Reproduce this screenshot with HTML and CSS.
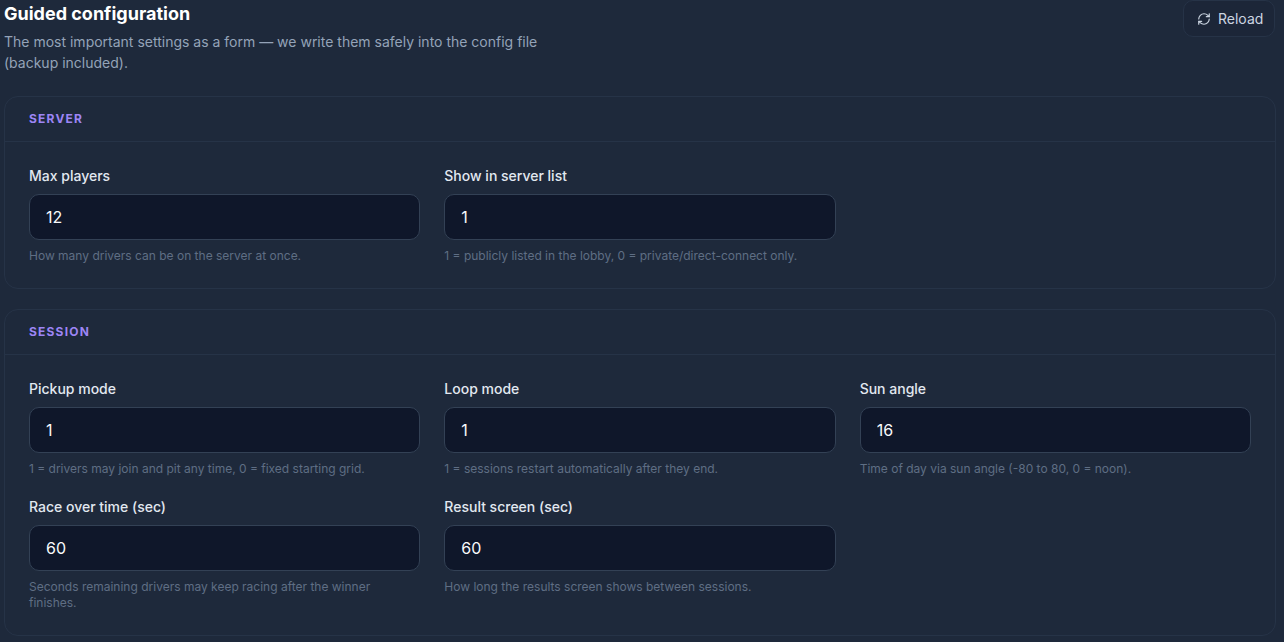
FILE: index.html
```html
<!DOCTYPE html>
<html lang="en">
<head>
    <meta charset="UTF-8">
    <meta name="viewport" content="width=device-width, initial-scale=1.0">
    <title>Guided configuration</title>
    <link rel="stylesheet" href="styles.css">
</head>
<body>
    <div class="page">
        <header class="page-head">
            <div class="page-intro">
                <h1>Guided configuration</h1>
                <p>The most important settings as a form — we write them safely into the config file (backup included).</p>
            </div>
            <button class="btn-reload" type="button">
                <svg viewBox="0 0 24 24" fill="none" stroke="currentColor" stroke-width="2" stroke-linecap="round" stroke-linejoin="round">
                    <path d="M3 12a9 9 0 0 1 9-9 9.75 9.75 0 0 1 6.74 2.74L21 8"/>
                    <path d="M21 3v5h-5"/>
                    <path d="M21 12a9 9 0 0 1-9 9 9.75 9.75 0 0 1-6.74-2.74L3 16"/>
                    <path d="M8 16H3v5"/>
                </svg>
                Reload
            </button>
        </header>

        <section class="card">
            <h2 class="card-title">Server</h2>
            <div class="card-body">
                <div class="field">
                    <label>Max players</label>
                    <input class="input" type="text" value="12">
                    <small>How many drivers can be on the server at once.</small>
                </div>
                <div class="field">
                    <label>Show in server list</label>
                    <input class="input" type="text" value="1">
                    <small>1 = publicly listed in the lobby, 0 = private/direct-connect only.</small>
                </div>
            </div>
        </section>

        <section class="card">
            <h2 class="card-title">Session</h2>
            <div class="card-body">
                <div class="field">
                    <label>Pickup mode</label>
                    <input class="input" type="text" value="1">
                    <small>1 = drivers may join and pit any time, 0 = fixed starting grid.</small>
                </div>
                <div class="field">
                    <label>Loop mode</label>
                    <input class="input" type="text" value="1">
                    <small>1 = sessions restart automatically after they end.</small>
                </div>
                <div class="field">
                    <label>Sun angle</label>
                    <input class="input" type="text" value="16">
                    <small>Time of day via sun angle (-80 to 80, 0 = noon).</small>
                </div>
                <div class="field">
                    <label>Race over time (sec)</label>
                    <input class="input" type="text" value="60">
                    <small>Seconds remaining drivers may keep racing after the winner finishes.</small>
                </div>
                <div class="field">
                    <label>Result screen (sec)</label>
                    <input class="input" type="text" value="60">
                    <small>How long the results screen shows between sessions.</small>
                </div>
            </div>
        </section>
    </div>
</body>
</html>
```

FILE: styles.css
```css
* {
    margin: 0;
    padding: 0;
    box-sizing: border-box;
}

body {
    font-family: Inter, "Liberation Sans", sans-serif;
    background: #1e293b;
    color: #f1f5f9;
    overflow: hidden;
}

.page {
    height: 642px;
    padding: 0 8px 0 4px;
}

.page-head {
    display: flex;
    justify-content: space-between;
    align-items: flex-start;
    margin-bottom: 23px;
}

.page-intro {
    max-width: 560px;
}

.page-intro h1 {
    font-size: 18px;
    line-height: 27px;
    font-weight: 700;
    color: #fff;
    margin-bottom: 4px;
}

.page-intro p {
    font-size: 14px;
    line-height: 21px;
    color: #94a3b8;
}

.btn-reload {
    display: flex;
    align-items: center;
    gap: 7px;
    height: 37px;
    width: 92px;
    padding: 0 0 0 13px;
    margin-right: 1px;
    background: #1c2638;
    border: 1px solid #263347;
    border-radius: 10px;
    color: #cbd5e1;
    font: 400 14px Inter, sans-serif;
}

.btn-reload svg {
    width: 14px;
    height: 14px;
}

.card {
    border: 1px solid #263347;
    border-radius: 14px;
    margin-bottom: 20px;
}

.card-title {
    padding: 15px 24px;
    font-size: 12px;
    line-height: 14px;
    font-weight: 700;
    letter-spacing: 1.2px;
    text-transform: uppercase;
    color: #9d85f5;
    border-bottom: 1px solid #263347;
}

.card-body {
    display: grid;
    grid-template-columns: repeat(3, 1fr);
    gap: 19px 24px;
    padding: 23px 24px 24px;
}

.field label {
    display: block;
    font-size: 14px;
    line-height: 21px;
    font-weight: 500;
    color: #e2e8f0;
    margin-bottom: 8px;
}

.input {
    display: block;
    width: 100%;
    height: 46px;
    padding: 0 16px;
    background: #0f172a;
    border: 1px solid #334155;
    border-radius: 10px;
    color: #f8fafc;
    font: 400 16px Inter, sans-serif;
}

.field small {
    display: block;
    margin-top: 8px;
    font-size: 12px;
    line-height: 16px;
    color: #5f6e84;
}
```
